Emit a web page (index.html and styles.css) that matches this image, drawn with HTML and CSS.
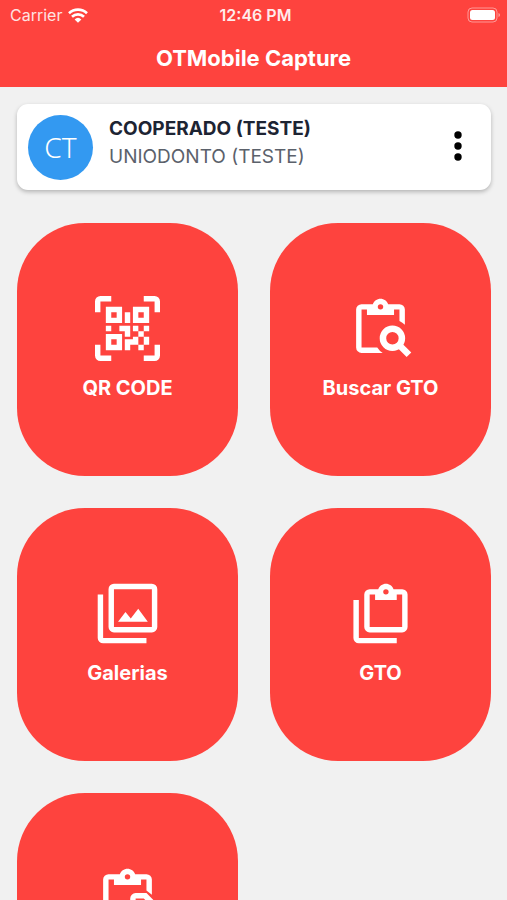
FILE: index.html
```html
<!DOCTYPE html>
<html lang="pt-BR">
<head>
    <meta charset="UTF-8">
    <meta name="viewport" content="width=device-width, initial-scale=1">
    <title>OTMobile Capture</title>
    <link rel="stylesheet" href="styles.css">
</head>
<body>
    <header class="header">
        <div class="status-bar">
            <div class="carrier">
                <span>Carrier</span>
                <svg class="wifi" viewBox="0 0 20 15">
                    <path d="M1 5.2A13 13 0 0 1 19 5.2M4 8.8A8.600 8.600 0 0 1 16 8.8" fill="none" stroke="currentColor" stroke-width="2.6"/>
                    <path d="M6.600 11.400A5 5 0 0 1 13.400 11.400L10 14.800Z" fill="currentColor"/>
                </svg>
            </div>
            <span class="time">12:46 PM</span>
            <svg class="battery" viewBox="0 0 34 16">
                <rect x="1" y="1" width="29" height="14" rx="4" fill="none" stroke="currentColor" stroke-opacity=".45"/>
                <rect x="3" y="3" width="25" height="10" rx="2.5" fill="currentColor"/>
                <path d="M31.500 6v4q1.500-.5 1.500-2t-1.500-2" fill="currentColor" fill-opacity=".5"/>
            </svg>
        </div>
        <h1>OTMobile Capture</h1>
    </header>

    <main class="content">
        <section class="user-card">
            <div class="avatar">CT</div>
            <div class="user-info">
                <h2>COOPERADO (TESTE)</h2>
                <p>UNIODONTO (TESTE)</p>
            </div>
            <button class="menu-button" aria-label="Menu">
                <svg viewBox="0 0 8 30">
                    <circle cx="4" cy="4" r="3.7"/>
                    <circle cx="4" cy="15" r="3.7"/>
                    <circle cx="4" cy="26" r="3.7"/>
                </svg>
            </button>
        </section>

        <div class="tiles">
            <button class="tile">
                <svg viewBox="0 0 24 24"><path d="M4,4H10V10H4V4M20,4V10H14V4H20M14,15H16V13H14V11H16V13H18V11H20V13H18V15H20V18H18V20H16V18H13V20H11V16H14V15M16,15V18H18V15H16M4,20V14H10V20H4M6,6V8H8V6H6M16,6V8H18V6H16M6,16V18H8V16H6M4,11H6V13H4V11M9,11H13V15H11V13H9V11M11,6H13V10H11V6M2,2V6H0V2A2,2 0 0,1 2,0H6V2H2M22,0A2,2 0 0,1 24,2V6H22V2H18V0H22M2,18V22H6V24H2A2,2 0 0,1 0,22V18H2M22,22V18H24V22A2,2 0 0,1 22,24H18V22H22Z"/></svg>
                <span>QR CODE</span>
            </button>
            <button class="tile">
                <svg viewBox="0 0 24 24">
                    <path fill-rule="evenodd" d="M19 3H14.820C14.400 1.840 13.300 1 12 1S9.600 1.840 9.180 3H5A2 2 0 0 0 3 5V19A2 2 0 0 0 5 21H12.800A6.500 6.500 0 0 1 10.800 19H5V5H7V7H17V5H19V9.200A6.500 6.500 0 0 1 21 10.600V5A2 2 0 0 0 19 3M12 3A1 1 0 0 1 12 5A1 1 0 0 1 12 3"/>
                    <circle class="lens" cx="16.4" cy="15.6" r="3.5"/>
                    <path class="lens" d="M18.800 18L22.500 21.700"/>
                </svg>
                <span>Buscar GTO</span>
            </button>
            <button class="tile">
                <svg viewBox="0 0 24 24"><path d="M21,17H7V3H21M21,1H7A2,2 0 0,0 5,3V17A2,2 0 0,0 7,19H21A2,2 0 0,0 23,17V3A2,2 0 0,0 21,1M3,5H1V21A2,2 0 0,0 3,23H19V21H3M15.960,10.290L13.210,13.830L11.250,11.470L8.500,15H19.500L15.960,10.290Z"/></svg>
                <span>Galerias</span>
            </button>
            <button class="tile">
                <svg viewBox="0 0 24 24"><path d="M4,7V21H18V23H4A2,2 0 0,1 2,21V7H4M20,3A2,2 0 0,1 22,5V17A2,2 0 0,1 20,19H8A2,2 0 0,1 6,17V5A2,2 0 0,1 8,3H11.180C11.600,1.840 12.700,1 14,1C15.300,1 16.400,1.840 16.820,3H20M14,3A1,1 0 0,0 13,4A1,1 0 0,0 14,5A1,1 0 0,0 15,4A1,1 0 0,0 14,3M10,7V5H8V17H20V5H18V7M10,7Z"/></svg>
                <span>GTO</span>
            </button>
            <button class="tile" aria-label="GTO">
                <svg viewBox="0 0 24 24">
                    <path fill-rule="evenodd" d="M19 3H14.820C14.400 1.840 13.300 1 12 1S9.600 1.840 9.180 3H5A2 2 0 0 0 3 5V19A2 2 0 0 0 5 21H12V19H5V5H7V7H17V5H19V9L21 10.600V5A2 2 0 0 0 19 3M12 3A1 1 0 0 1 12 5A1 1 0 0 1 12 3"/>
                    <path d="M15 10H19L22 13V21H13V12A2 2 0 0 1 15 10M15 12V19H20V14L18 12Z" fill-rule="evenodd"/>
                </svg>
            </button>
        </div>
    </main>
</body>
</html>
```
FILE: styles.css
```css
* {
    box-sizing: border-box;
}
body {
    display: flex;
    flex-direction: column;
    height: 100vh;
    margin: 0;
    overflow: hidden;
    background-color: #f1f1f1;
    font-family: Inter, "Liberation Sans", sans-serif;
}
h1, h2, p {
    margin: 0;
}
button {
    border: none;
    cursor: pointer;
    font-family: inherit;
}
.header {
    flex: none;
    background-color: #fe433e;
    color: white;
}
.status-bar {
    display: grid;
    grid-template-columns: 1fr auto 1fr;
    align-items: center;
    height: 30px;
    padding: 0 6px 0 10px;
    font-size: 16px;
}
.carrier {
    display: flex;
    align-items: center;
    gap: 6px;
}
.carrier span {
    opacity: 0.85;
}
.wifi {
    width: 20px;
    height: 15px;
}
.time {
    font-weight: 600;
    opacity: 0.9;
}
.battery {
    justify-self: end;
    width: 34px;
    height: 16px;
}
.header h1 {
    padding: 12px 0 13px;
    font-size: 22px;
    font-weight: 700;
    line-height: 32px;
    text-align: center;
}
.content {
    flex: 1;
    min-height: 0;
    padding: 17px 16px 17px 17px;
    overflow: hidden;
}
.user-card {
    display: flex;
    align-items: center;
    gap: 16px;
    height: 86px;
    padding: 0 21px 0 11px;
    border-radius: 11px;
    background-color: white;
    box-shadow: 0 2px 4px rgba(0, 0, 0, 0.25);
}
.avatar {
    width: 65px;
    height: 65px;
    border-radius: 50%;
    background-color: #3399f1;
    color: white;
    font-family: "Noto Sans", sans-serif;
    font-size: 28px;
    font-weight: 300;
    line-height: 64px;
    text-align: center;
}
.user-info {
    flex: 1;
    padding-bottom: 8px;
    font-size: 19px;
    line-height: 28px;
}
.user-info h2 {
    color: #1d2433;
    font-size: 19px;
    font-weight: 700;
}
.user-info p {
    color: #5b616b;
}
.menu-button {
    width: 24px;
    height: 40px;
    padding: 0;
    background: none;
}
.menu-button svg {
    width: 8px;
    height: 30px;
}
.tiles {
    display: grid;
    grid-template-columns: 1fr 1fr;
    gap: 32px;
    padding-top: 33px;
}
.tile {
    display: flex;
    flex-direction: column;
    align-items: center;
    gap: 10px;
    height: 253px;
    padding: 73px 0 0;
    border-radius: 68px;
    background-color: #fe433e;
    color: white;
    font-size: 20px;
    font-weight: 700;
    line-height: 34px;
}
.tile svg {
    width: 65px;
    height: 65px;
    fill: currentColor;
}
.tile .lens {
    fill: none;
    stroke: currentColor;
    stroke-width: 2.4;
}
```
